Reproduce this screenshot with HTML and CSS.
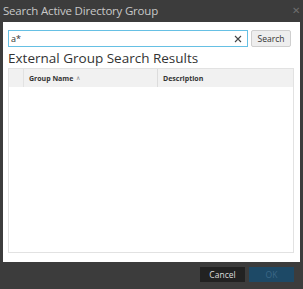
FILE: index.html
```html
<!DOCTYPE html>
<html lang="en">
<head>
  <meta charset="UTF-8">
  <title>Search Active Directory Group</title>
  <link rel="stylesheet" href="styles.css">
</head>
<body>
  <div class="dialog">
    <div class="titlebar">
      <span class="title">Search Active Directory Group</span>
      <span class="close">&#x2715;</span>
    </div>
    <div class="content">
      <div class="search-row">
        <div class="search-box">
          <input type="text" value="a*">
          <svg class="clear" width="8" height="8" viewBox="0 0 8 8">
            <path d="M1 1L7 7M7 1L1 7" stroke="#444" stroke-width="1.1"/>
          </svg>
        </div>
        <button class="btn-search">Search</button>
      </div>
      <h2>External Group Search Results</h2>
      <div class="grid">
        <div class="grid-head">
          <div class="col-check"></div>
          <div class="col-name">Group Name <span class="sort">&#x2227;</span></div>
          <div class="col-desc">Description</div>
        </div>
        <div class="grid-body"></div>
      </div>
    </div>
    <div class="footer">
      <button class="btn-cancel">Cancel</button>
      <button class="btn-ok">OK</button>
    </div>
  </div>
</body>
</html>
```

FILE: styles.css
```css
body {
  margin: 0;
  background: #3c3c3c;
  font-family: "Open Sans", Arial, sans-serif;
}
.dialog {
  width: 303px;
  height: 289px;
  background: #3c3c3c;
  box-sizing: border-box;
  padding: 0 3px;
  display: flex;
  flex-direction: column;
}
.titlebar {
  height: 22px;
  flex: none;
  display: flex;
  align-items: center;
  justify-content: space-between;
}
.title {
  color: #c8c8c8;
  font-size: 11.5px;
  letter-spacing: -0.2px;
  margin-top: -1px;
}
.close {
  color: #6e6e6e;
  font-size: 10px;
  margin-top: -2px;
}
.content {
  background: #fff;
  height: 240px;
  flex: none;
  padding: 8px 6px 0 5px;
  box-sizing: border-box;
  display: flex;
  flex-direction: column;
}
.search-row {
  display: flex;
  gap: 3px;
  height: 17px;
}
.search-box {
  position: relative;
  width: 240px;
}
.search-box input {
  display: block;
  width: 100%;
  height: 17px;
  box-sizing: border-box;
  border: 1px solid #66c0e4;
  padding: 0 0 0 2px;
  font-family: inherit;
  font-size: 9px;
  color: #333;
  outline: none;
}
.clear {
  position: absolute;
  right: 6px;
  top: 5px;
}
.btn-search {
  width: 40px;
  height: 17px;
  background: #eeeeee;
  border: 1px solid #cfcfcf;
  border-radius: 2px;
  font-family: inherit;
  font-size: 8.5px;
  color: #333;
  padding: 0;
}
h2 {
  margin: 3px 0 1px 0;
  font-size: 13.5px;
  font-weight: normal;
  color: #333;
  line-height: 17px;
}
.grid {
  width: 286px;
  height: 185px;
  flex: none;
  box-sizing: border-box;
  border: 1px solid #e2e2e2;
  display: flex;
  flex-direction: column;
}
.grid-head {
  display: flex;
  height: 18px;
  background: #f1f1f1;
  font-size: 7px;
  font-weight: bold;
  color: #333;
}
.grid-head > div {
  display: flex;
  align-items: center;
  box-sizing: border-box;
}
.col-check {
  width: 15px;
  border-right: 1px solid #e2e2e2;
}
.col-name {
  width: 134px;
  padding-left: 5px;
  border-right: 1px solid #dcdcdc;
}
.col-desc {
  flex: 1;
  padding-left: 5px;
}
.sort {
  font-weight: normal;
  color: #888;
  font-size: 6px;
  margin-left: 3px;
}
.grid-body {
  flex: 1;
}
.footer {
  flex: 1;
  display: flex;
  justify-content: flex-end;
  align-items: flex-start;
  gap: 4px;
  padding: 5px 6px 0 0;
}
.footer button {
  width: 45px;
  height: 15px;
  border: none;
  font-family: inherit;
  font-size: 8.5px;
  padding: 0;
}
.btn-cancel {
  background: #222;
  color: #ddd;
}
.btn-ok {
  background: #1d4966;
  color: #3c6886;
}
```
